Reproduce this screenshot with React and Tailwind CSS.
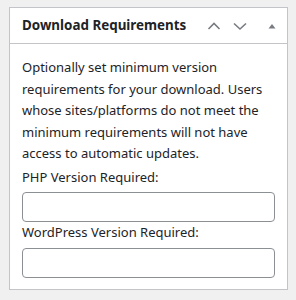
import React from 'react'

function Chevron({ dir = 'up', className = '' }) {
  return (
    <svg width="14" height="10" viewBox="0 0 14 10" className={className} fill="none">
      {dir === 'up' ? (
        <path d="M1.5 8 L7 2.5 L12.5 8" stroke="#787c82" strokeWidth="1.6" />
      ) : (
        <path d="M1 2.5 L7 8 L13 2.5" stroke="#787c82" strokeWidth="1.6" />
      )}
    </svg>
  )
}

export default function App() {
  return (
    <div
      className="w-[296px] h-[300px] bg-[#f0f0f1] pt-[7px] pl-[9px] pr-[8px] text-[#1d2327]"
      style={{ fontFamily: '"Noto Sans", "Open Sans", sans-serif' }}
    >
      <div className="border border-[#c3c4c7] bg-white">
        <div className="h-[36px] border-b border-[#c3c4c7] flex items-center pl-[12px] pr-[11px]">
          <h2 className="text-[13.4px] font-bold flex-1 leading-none">Download Requirements</h2>
          <div className="flex items-center">
            <Chevron dir="up" className="mr-[12px]" />
            <Chevron dir="down" className="mr-[21px]" />
            <svg width="8" height="6" viewBox="0 0 8 6">
              <path d="M0.5 5.5 L4 1 L7.5 5.5 Z" fill="#787c82" />
            </svg>
          </div>
        </div>
        <div className="px-[12px] pb-[11px]">
          <p className="mt-[13px] mb-[2px] text-[13px] leading-[21.5px]">
            Optionally set minimum version requirements for your download. Users whose sites/platforms do not meet the minimum requirements will not have access to automatic updates.
          </p>
          <label className="block text-[13px] leading-[21px]">PHP Version Required:</label>
          <input
            type="text"
            className="block w-full mt-[4px] h-[30px] border border-[#8c8f94] rounded-[4px] bg-white outline-none"
          />
          <label className="block text-[13px] leading-[21px]">WordPress Version Required:</label>
          <input
            type="text"
            className="block w-full mt-[5px] h-[30px] border border-[#8c8f94] rounded-[4px] bg-white outline-none"
          />
        </div>
      </div>
    </div>
  )
}
